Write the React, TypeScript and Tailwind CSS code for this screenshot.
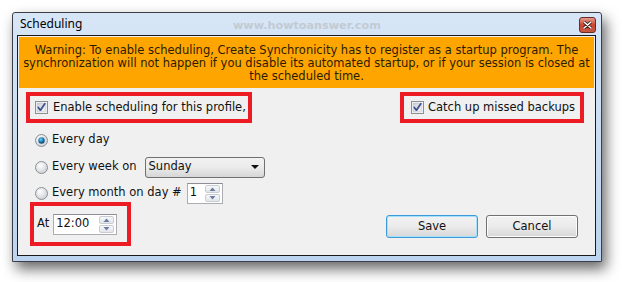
import React from 'react';

const FONT = { fontFamily: '"DejaVu Sans", Verdana, sans-serif' };

function CheckBox() {
  return (
    <svg width="13" height="13" viewBox="0 0 13 13" className="shrink-0">
      <defs>
        <linearGradient id="cbg" x1="0" y1="0" x2="1" y2="1">
          <stop offset="0" stopColor="#cbcfd5" />
          <stop offset="1" stopColor="#f4f5f7" />
        </linearGradient>
      </defs>
      <rect x="0.5" y="0.5" width="12" height="12" fill="#fff" stroke="#8f8f8f" />
      <rect x="2" y="2" width="9" height="9" fill="url(#cbg)" stroke="#b6bcc6" strokeWidth="0.6" />
      <path d="M3.3 6.4 L5.4 9.2 L9.8 2.8" fill="none" stroke="#3c4f8c" strokeWidth="1.7" strokeLinecap="round" strokeLinejoin="round" />
    </svg>
  );
}

function Radio({ checked }: { checked?: boolean }) {
  return (
    <svg width="13" height="13" viewBox="0 0 13 13" className="shrink-0">
      <defs>
        <radialGradient id="rbg" cx="0.4" cy="0.35" r="0.7">
          <stop offset="0" stopColor="#ffffff" />
          <stop offset="1" stopColor="#c9cdd2" />
        </radialGradient>
        <radialGradient id="rdot" cx="0.4" cy="0.35" r="0.7">
          <stop offset="0" stopColor="#7fd0f5" />
          <stop offset="0.5" stopColor="#1b7fb8" />
          <stop offset="1" stopColor="#0d3b5e" />
        </radialGradient>
      </defs>
      <circle cx="6.5" cy="6.5" r="6" fill="url(#rbg)" stroke="#8c8f93" />
      {checked && <circle cx="6.5" cy="6.5" r="3.2" fill="url(#rdot)" />}
    </svg>
  );
}

function SpinButtons() {
  return (
    <div className="flex flex-col gap-px w-[15px] h-[17px] ml-auto">
      <div className="flex-1 flex items-center justify-center rounded-[2px] border border-[#c9ccd1] bg-gradient-to-b from-[#f7f8f9] to-[#e2e5e9]">
        <svg width="7" height="4" viewBox="0 0 7 4">
          <path d="M0.5 4 L3.5 0.5 L6.5 4 Z" fill="#6a7ca3" />
        </svg>
      </div>
      <div className="flex-1 flex items-center justify-center rounded-[2px] border border-[#c9ccd1] bg-gradient-to-b from-[#f7f8f9] to-[#e2e5e9]">
        <svg width="7" height="4" viewBox="0 0 7 4">
          <path d="M0.5 0 L3.5 3.5 L6.5 0 Z" fill="#6a7ca3" />
        </svg>
      </div>
    </div>
  );
}

function SpinBox({ value, width }: { value: string; width: string }) {
  return (
    <div className={`${width} h-[21px] flex items-center bg-white border border-[#abadb3] border-t-[#8b8e94] pl-[2px] pr-[2px]`}>
      <span className="text-[11.5px] text-[#111]">{value}</span>
      <SpinButtons />
    </div>
  );
}

export default function App() {
  return (
    <div className="w-[622px] h-[282px] bg-white overflow-hidden" style={FONT}>
      <div className="pt-[12px] pl-[12px]">
        <div className="w-[590px] h-[250px] flex flex-col border border-[#3b3f45] rounded-t-[3px] bg-gradient-to-b from-[#d7e6f7] to-[#bcd4ef] shadow-[4px_7px_14px_rgba(0,0,0,0.6)]">
          {/* Title bar */}
          <div className="relative h-[22px] flex items-center pl-[7px] pr-[5px]">
            <span className="text-[12px] text-black" style={{ fontFamily: '"Noto Sans", "Open Sans", sans-serif' }}>
              Scheduling
            </span>
            <span className="absolute left-[220px] top-[6px] text-[11.2px] leading-[13px] font-bold text-[#c2cad2]">
              www.howtoanswer.com
            </span>
            <div className="ml-auto mt-[2px] w-[17px] h-[16px] rounded-[3px] border border-[#6b2a22] bg-gradient-to-b from-[#e49a8c] via-[#c8442f] to-[#c65a43] flex items-center justify-center">
              <svg width="9" height="8" viewBox="0 0 9 8">
                <path d="M1 1 L8 7 M8 1 L1 7" stroke="#3a1a16" strokeWidth="3" strokeLinecap="round" />
                <path d="M1 1 L8 7 M8 1 L1 7" stroke="#fff" strokeWidth="1.6" strokeLinecap="round" />
              </svg>
            </div>
          </div>

          {/* Client area */}
          <div className="flex-1 ml-[4px] mr-[5px] mb-[5px] border border-[#1a1a1a] bg-[#f0f0f0] p-[1px] flex flex-col">
            <div className="h-[51px] bg-[#ffa500] flex items-center justify-center text-center text-[11.5px] leading-[13px] text-[#2b1c00] px-[2px] pt-[2px]">
              <p>
                Warning: To enable scheduling, Create Synchronicity has to register as a startup program. The
                synchronization will not happen if you disable its automated startup, or if your session is closed at
                the scheduled time.
              </p>
            </div>

            <div className="mt-[4px] flex items-start">
              <div className="ml-[7px] w-[226px] h-[31px] border-4 border-[#ed1c24] flex items-center pl-[5px] gap-[5px]">
                <CheckBox />
                <span className="text-[11.5px] text-[#111]">Enable scheduling for this profile,</span>
              </div>
              <div className="ml-auto mr-[10px] w-[184px] h-[31px] border-4 border-[#ed1c24] flex items-center pl-[7px] gap-[4px]">
                <CheckBox />
                <span className="text-[11.5px] text-[#111]">Catch up missed backups</span>
              </div>
            </div>

            <div className="mt-[8px] h-[18px] ml-[16px] flex items-center gap-[4px]">
              <Radio checked />
              <span className="text-[11.5px] text-[#111]">Every day</span>
            </div>

            <div className="mt-[9px] h-[18px] ml-[16px] flex items-center gap-[4px]">
              <Radio />
              <span className="text-[11.5px] text-[#111]">Every week on</span>
              <div className="ml-[4px] w-[120px] h-[21px] rounded-[3px] border border-[#707070] bg-gradient-to-b from-[#f2f2f2] via-[#ebebeb] to-[#d6d6d6] flex items-center pl-[3px] pr-[5px]">
                <span className="text-[11.5px] text-[#111]">Sunday</span>
                <svg width="8" height="4" viewBox="0 0 8 4" className="ml-auto">
                  <path d="M0 0 L8 0 L4 4 Z" fill="#111" />
                </svg>
              </div>
            </div>

            <div className="mt-[8px] h-[18px] ml-[16px] flex items-center gap-[4px]">
              <Radio />
              <span className="text-[11.5px] text-[#111]">Every month on day #</span>
              <div className="ml-[1px]">
                <SpinBox value="1" width="w-[36px]" />
              </div>
            </div>

            <div className="flex items-start">
              <div className="ml-[11px] w-[101px] h-[44px] border-4 border-[#ed1c24] flex items-center pl-[3px] gap-[4px]">
                <span className="text-[11.5px] text-[#111]">At</span>
                <SpinBox value="12:00" width="w-[64px]" />
              </div>
              <div className="ml-auto mr-[16px] mt-[13px] flex gap-[8px]">
                <button className="w-[92px] h-[23px] rounded-[3px] border border-[#3c9ad9] bg-gradient-to-b from-[#f2f2f2] via-[#ebebeb] to-[#d7d7d7] shadow-[inset_0_0_0_1px_#a6e1fa] text-[11.5px] text-[#111]">
                  Save
                </button>
                <button className="w-[92px] h-[23px] rounded-[3px] border border-[#707070] bg-gradient-to-b from-[#f2f2f2] via-[#ebebeb] to-[#d7d7d7] shadow-[inset_0_0_0_1px_#fcfcfc] text-[11.5px] text-[#111]">
                  Cancel
                </button>
              </div>
            </div>
          </div>
        </div>
      </div>
    </div>
  );
}
